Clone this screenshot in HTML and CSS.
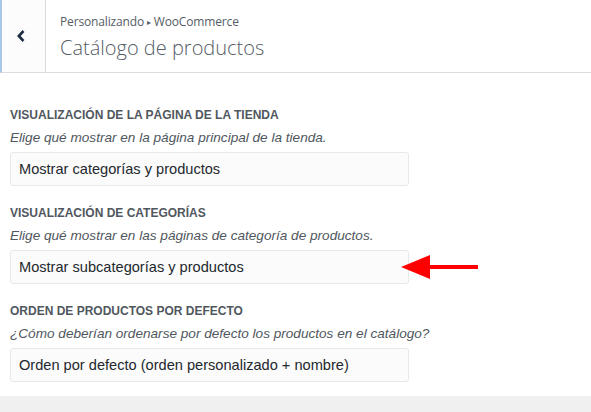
FILE: index.html
```html
<!doctype html>
<html>
    <head>
        <title>Catálogo de productos</title>
        <meta charset="utf-8" />
        <meta name="viewport" content="width=device-width" />
        <link rel="stylesheet" href="styles.css">
    </head>
    <body>
        <div id="wrapper">
            <header class="panel-head">
                <button class="back" type="button" aria-label="Volver">
                    <svg width="10" height="14" viewBox="0 0 10 14">
                        <path d="M7.5 2 L2.8 7 L7.5 12" fill="none" stroke="#1f2d40" stroke-width="2.6" />
                    </svg>
                </button>
                <div class="titles">
                    <span class="crumb">Personalizando <span class="sep">&#9656;</span> WooCommerce</span>
                    <h1 class="ttl">Catálogo de productos</h1>
                </div>
            </header>
            <section class="controls">
                <div class="control">
                    <h2 class="label">Visualización de la página de la tienda</h2>
                    <p class="desc">Elige qué mostrar en la página principal de la tienda.</p>
                    <div class="select">Mostrar categorías y productos</div>
                </div>
                <div class="control">
                    <h2 class="label">Visualización de categorías</h2>
                    <p class="desc">Elige qué mostrar en las páginas de categoría de productos.</p>
                    <div class="row">
                        <div class="select">Mostrar subcategorías y productos</div>
                        <svg class="pointer" width="78" height="26" viewBox="0 0 78 26">
                            <polygon points="0,13 29,1 29,25" fill="#f00" />
                            <rect x="28" y="11" width="49" height="4" fill="#f00" />
                        </svg>
                    </div>
                </div>
                <div class="control">
                    <h2 class="label">Orden de productos por defecto</h2>
                    <p class="desc">¿Cómo deberían ordenarse por defecto los productos en el catálogo?</p>
                    <div class="select">Orden por defecto (orden personalizado + nombre)</div>
                </div>
            </section>
            <footer class="band"></footer>
        </div>
    </body>
</html>
```
FILE: styles.css
```css
html {
    height: 100%;
    box-sizing: border-box;
    margin: 0px;
    padding: 0px;
}

body {
    font-family: "Liberation Sans", Arial, sans-serif;
    height: 100%;
    margin: 0px;
    padding: 0px;
    background-color: #fff;
    color: #23282d;
}

#wrapper {
    height: 100%;
    display: grid;
    grid-template-rows: 73px 1fr 16px;
}

.panel-head {
    display: flex;
    border-bottom: 1px solid #dcdcde;
    border-left: 2px solid #a7c9e7;
    background-color: #fff;
}

.back {
    width: 44px;
    border: none;
    border-right: 1px solid #dcdcde;
    background-color: #fcfcfc;
    display: flex;
    align-items: center;
    justify-content: center;
    padding: 0px 6px 0px 0px;
    margin: 0px;
}

.titles {
    display: flex;
    flex-direction: column;
    padding: 12px 0px 0px 14px;
    font-family: "Open Sans", sans-serif;
    color: #555d66;
}

.crumb {
    font-size: 12px;
    letter-spacing: -0.15px;
    line-height: 20px;
}

.crumb .sep {
    font-size: 8px;
    position: relative;
    top: -1px;
}

.ttl {
    font-size: 20px;
    font-weight: 300;
    line-height: 30px;
    margin: 0px;
}

.controls {
    padding: 34px 10px 0px 10px;
    overflow: hidden;
}

.control {
    margin-bottom: 19px;
}

.control:last-child {
    margin-bottom: 0px;
}

.label {
    font-size: 12px;
    font-weight: bold;
    text-transform: uppercase;
    color: #50575e;
    margin: 0px;
    line-height: 16px;
}

.desc {
    font-size: 13.6px;
    font-style: italic;
    color: #50575e;
    margin: 6px 0px 0px 0px;
    line-height: 18px;
}

.row {
    display: flex;
    align-items: center;
}

.select {
    width: 381px;
    height: 32px;
    margin-top: 5px;
    padding: 0px 8px;
    box-sizing: content-box;
    background-color: #fbfbfb;
    border: 1px solid #e8e8e8;
    border-radius: 3px;
    font-size: 14.6px;
    line-height: 32px;
    color: #23282d;
}

.pointer {
    margin: 5px 0px 0px -8px;
}

.band {
    background-color: #f0f0f0;
}
```
